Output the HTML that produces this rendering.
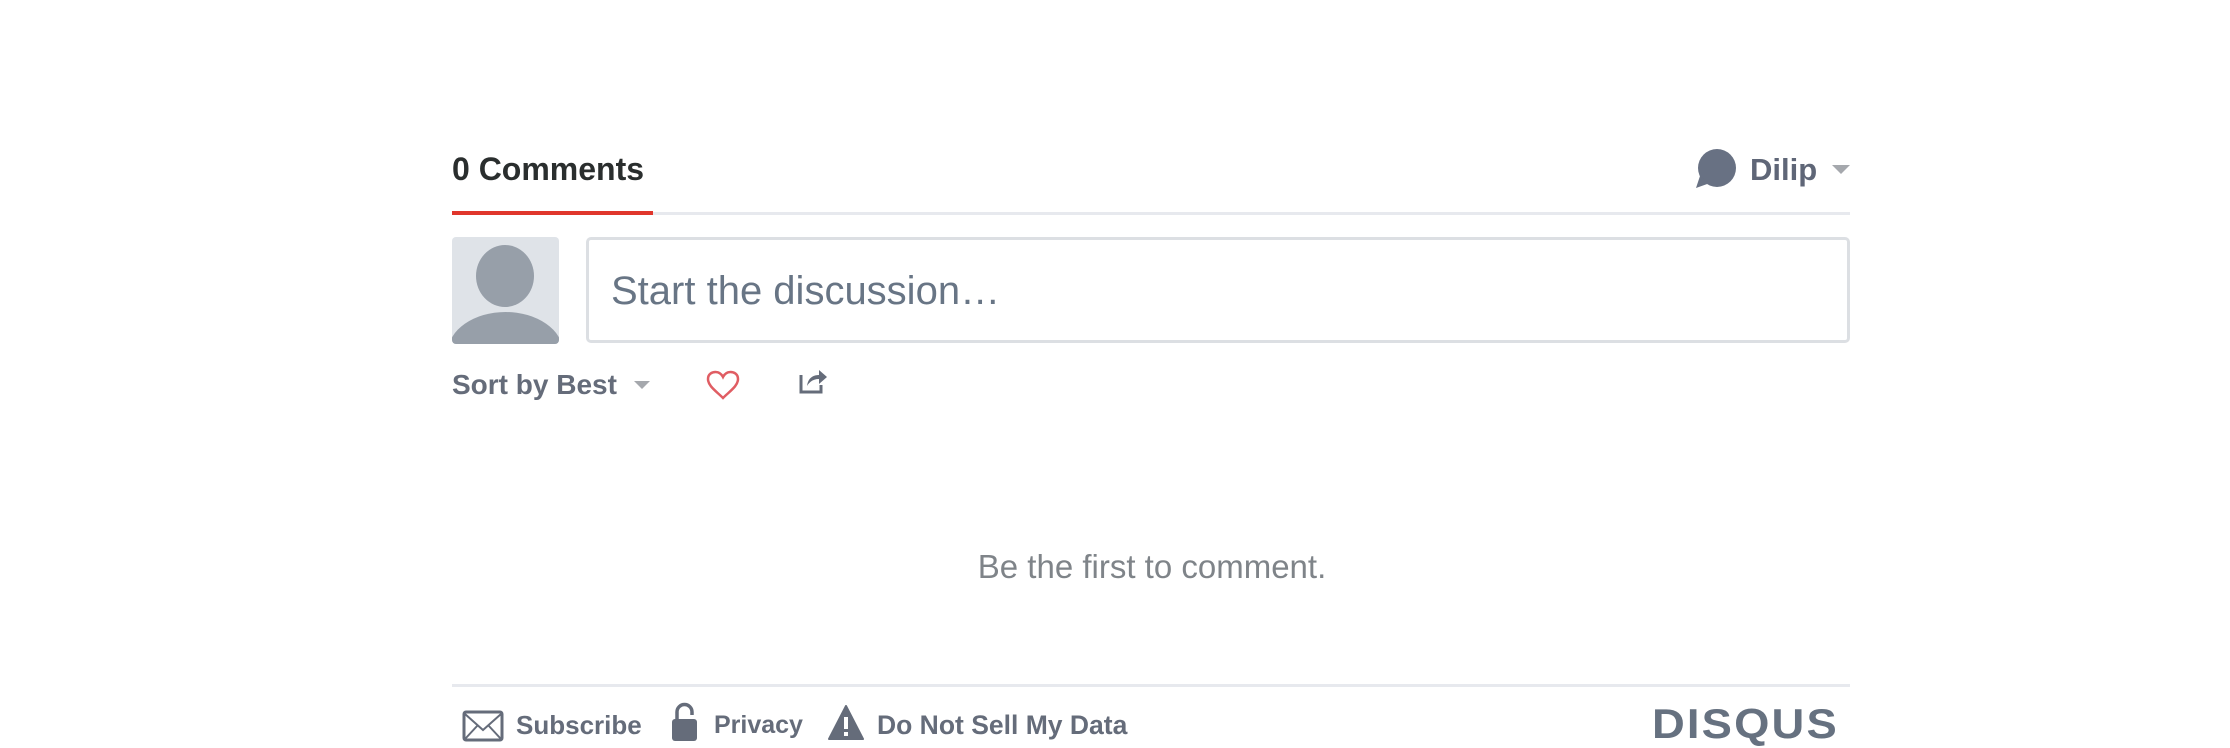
<!DOCTYPE html>
<html><head><meta charset="utf-8"><style>
body{margin:0;width:2230px;height:748px;background:#fff;position:relative;overflow:hidden;font-family:"Liberation Sans",Arial,sans-serif;}
.a{position:absolute;}
.b{font-weight:bold;color:#656c7a;}
</style></head><body>
<div class="a" style="left:452px;top:150px;font-size:32px;font-weight:bold;color:#2a2e2e;line-height:38px;">0 Comments</div>
<div class="a" style="left:452px;top:212px;width:1398px;height:3px;background:#e7e9ee"></div>
<div class="a" style="left:452px;top:211px;width:201px;height:4px;background:#e0362c"></div>
<svg class="a" style="left:1694px;top:148px" width="44" height="44" viewBox="0 0 44 44"><circle cx="23" cy="20" r="19" fill="#687183"/><path d="M6 28 L2 40 L16 35 Z" fill="#687183"/></svg>
<div class="a b" style="left:1750px;top:153px;font-size:31px;line-height:34px;color:#5f6677">Dilip</div>
<svg class="a" style="left:1832px;top:165px" width="18" height="10"><path d="M0 0H18L9 9Z" fill="#a5a8ad"/></svg>
<div class="a" style="left:452px;top:237px;width:107px;height:107px;background:#dfe3e8;border-radius:4px;overflow:hidden">
<div class="a" style="left:24px;top:8px;width:58px;height:62px;border-radius:50%;background:#979fa9"></div>
<div class="a" style="left:-4px;top:75px;width:115px;height:80px;border-radius:50%;background:#979fa9"></div>
</div>
<div class="a" style="left:586px;top:237px;width:1258px;height:100px;border:3px solid #dcdfe3;border-radius:5px"></div>
<div class="a" style="left:611px;top:268px;font-size:40px;color:#687585;line-height:46px">Start the discussion…</div>
<div class="a b" style="left:452px;top:369px;font-size:28px;line-height:32px">Sort by Best</div>
<svg class="a" style="left:634px;top:381px" width="16" height="9"><path d="M0 0H16L8 8Z" fill="#a5a8ad"/></svg>
<svg class="a" style="left:706px;top:370px" width="34" height="30" viewBox="0 0 34 30"><path d="M17 28 C10 21 2 16 2 9 C2 4 6 2 9.5 2 C13 2 15.5 4 17 7 C18.5 4 21 2 24.5 2 C28 2 32 4 32 9 C32 16 24 21 17 28Z" fill="none" stroke="#e05d63" stroke-width="2.5"/></svg>
<svg class="a" style="left:799px;top:367px" width="30" height="28" viewBox="0 0 30 28"><path d="M2 8V25H22V18" fill="none" stroke="#656c7a" stroke-width="3"/><path d="M8 19 C9 11 14 8 20 8V3L28 10L20 17V12C15 12 11 14 8 19Z" fill="#656c7a"/></svg>
<div class="a" style="left:0;width:2304px;top:548px;text-align:center;font-size:33px;color:#7f8489;line-height:38px">Be the first to comment.</div>
<div class="a" style="left:452px;top:684px;width:1398px;height:3px;background:#e7e9ee"></div>
<svg class="a" style="left:462px;top:710px" width="42" height="32" viewBox="0 0 42 32"><rect x="2" y="2" width="38" height="28" rx="2" fill="none" stroke="#656c7a" stroke-width="3"/><path d="M3 4L21 20L39 4M3 29L16 15M39 29L26 15" fill="none" stroke="#656c7a" stroke-width="2"/></svg>
<div class="a b" style="left:516px;top:710px;font-size:26px;line-height:30px">Subscribe</div>
<svg class="a" style="left:671px;top:702px" width="27" height="40" viewBox="0 0 27 40"><path d="M6 18V10A7.5 7.5 0 0 1 21 10V13" fill="none" stroke="#656c7a" stroke-width="3.5"/><rect x="1" y="17" width="25" height="22" rx="3" fill="#656c7a"/></svg>
<div class="a b" style="left:714px;top:710px;font-size:25px;line-height:30px">Privacy</div>
<svg class="a" style="left:828px;top:705px" width="36" height="36" viewBox="0 0 36 36"><path d="M18 1L35 34H1Z" fill="#656c7a" stroke="#656c7a" stroke-width="2" stroke-linejoin="round"/><rect x="16" y="12" width="4" height="12" fill="#fff"/><rect x="16" y="27" width="4" height="4" fill="#fff"/></svg>
<div class="a b" style="left:877px;top:710px;font-size:26.5px;line-height:30px">Do Not Sell My Data</div>
<div class="a" style="left:1652px;top:702px;font-size:42px;font-weight:900;color:#667180;letter-spacing:2px;line-height:44px;transform:scaleX(1.08);transform-origin:left">DISQUS</div>
</body></html>
